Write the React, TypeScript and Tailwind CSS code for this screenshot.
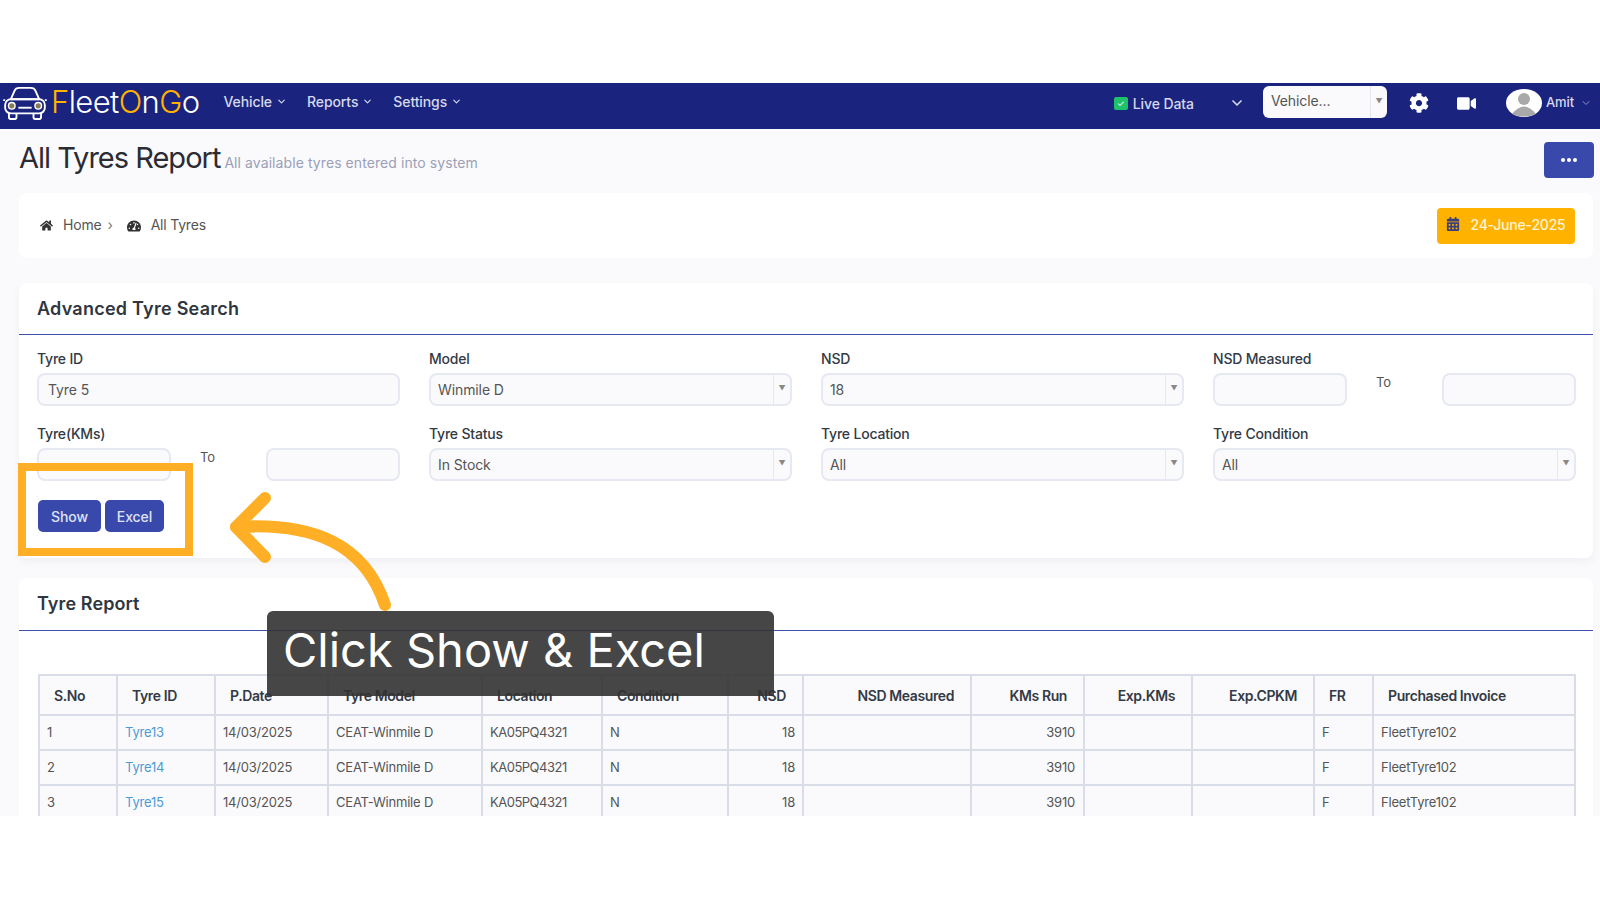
import { ChevronDown } from "lucide-react";
import { FaCalendarAlt, FaCog, FaHome, FaTachometerAlt, FaVideo } from "react-icons/fa";

const columns = [
  { label: "S.No", width: "w-[78px]" },
  { label: "Tyre ID", width: "w-[98px]" },
  { label: "P.Date", width: "w-[113px]" },
  { label: "Tyre Model", width: "w-[154px]" },
  { label: "Location", width: "w-[120px]" },
  { label: "Condition", width: "w-[126px]" },
  { label: "NSD", width: "w-[75px]", right: true },
  { label: "NSD Measured", width: "w-[168px]", right: true },
  { label: "KMs Run", width: "w-[113px]", right: true },
  { label: "Exp.KMs", width: "w-[108px]", right: true },
  { label: "Exp.CPKM", width: "w-[122px]", right: true },
  { label: "FR", width: "w-[59px]" },
  { label: "Purchased Invoice", width: "w-[202px]" },
];

const rows = ["Tyre13", "Tyre14", "Tyre15"];

function CarLogo() {
  return (
    <svg viewBox="0 0 48 36" className="h-[34px] w-[48px] shrink-0" fill="none" stroke="white" strokeWidth="2">
      <path d="M9 14 L13 5 Q14 2 18 2 H30 Q34 2 35 5 L39 14" />
      <path d="M9 14 H39" />
      <rect x="3" y="14" width="42" height="15" rx="6" />
      <path d="M3 15 H1 M45 15 H47" />
      <circle cx="10" cy="21" r="3.5" fill="#8a7a55" strokeWidth="1.5" />
      <circle cx="38" cy="21" r="3.5" fill="#8a7a55" strokeWidth="1.5" />
      <path d="M17 23 H31" />
      <path d="M7 29 V33 Q7 35 10 35 H12 Q15 35 15 33 V29 M33 29 V33 Q33 35 36 35 H38 Q41 35 41 33 V29" />
    </svg>
  );
}

function NavItem({ label }: { label: string }) {
  return (
    <div className="flex items-center gap-[4px] text-[14px] font-medium text-[#d6d9ec]">
      {label}
      <ChevronDown size={11} strokeWidth={2.5} />
    </div>
  );
}

function Field({ label, children }: { label: string; children: React.ReactNode }) {
  return (
    <div>
      <div className="mb-[6px] h-[17px] text-[14px] leading-[17px] font-medium tracking-[-0.2px] text-[#333a45]">{label}</div>
      {children}
    </div>
  );
}

function SelectBox({ value }: { value: string }) {
  return (
    <div className="flex h-[33px] items-center rounded-[8px] border-2 border-[#e6e9f1] bg-[#fafafc] text-[14px] text-[#555]">
      <span className="flex-1 pl-[7px]">{value}</span>
      <span className="flex h-full w-[17px] items-center justify-center border-l border-[#e6e9f1] text-[7px] text-[#888]">▼</span>
    </div>
  );
}

function RangeField({ label }: { label: string }) {
  return (
    <Field label={label}>
      <div className="flex items-start justify-between">
        <div className="h-[33px] w-[134px] rounded-[8px] border-2 border-[#e6e9f1] bg-[#fafafc]" />
        <span className="ml-[29px] flex-1 text-[13px] leading-[18px] text-[#555]">To</span>
        <div className="h-[33px] w-[134px] rounded-[8px] border-2 border-[#e6e9f1] bg-[#fafafc]" />
      </div>
    </Field>
  );
}

export default function App() {
  return (
    <div className="relative h-[900px] w-[1600px] overflow-hidden bg-white font-[family-name:Inter] tracking-[-0.1px]">
      <div className="mt-[83px] h-[733px] overflow-hidden bg-[#fafafc]">
        <nav className="flex h-[46px] items-center bg-[#1a237e]">
          <div className="mb-[6px] ml-[1px] flex items-center">
            <CarLogo />
            <span className="ml-[2px] pb-[3px] text-[31px] leading-none font-light tracking-[-0.6px] text-white">
              <span className="text-[#ffb300]">F</span>leet<span className="text-[#ffb300]">O</span>n<span className="text-[#ffb300]">G</span>o
            </span>
          </div>
          <div className="ml-[24px] flex gap-[20px] pb-[9px]">
            <NavItem label="Vehicle" />
            <NavItem label="Reports" />
            <NavItem label="Settings" />
          </div>
          <div className="ml-auto flex items-center pb-[6px]">
            <span className="flex h-[13px] w-[14px] items-center justify-center rounded-[2px] bg-[#1fc16b] text-[9px] leading-none text-white">✓</span>
            <span className="ml-[5px] text-[14px] font-medium text-[#d6d9ec]">Live Data</span>
            <ChevronDown size={16} strokeWidth={2.5} className="ml-[35px] text-[#d6d9ec]" />
            <div className="mb-[2px] ml-[18px] flex h-[32px] w-[124px] items-center rounded-[6px] bg-[#fafafc] text-[14px] text-[#555]">
              <span className="flex-1 pb-[3px] pl-[8px]">Vehicle...</span>
              <span className="flex h-full w-[17px] items-center justify-center border-l border-[#e6e9f1] text-[7px] text-[#888]">▼</span>
            </div>
            <FaCog size={20} className="ml-[22px] text-white" />
            <FaVideo size={19} className="ml-[28px] text-white" />
            <svg viewBox="0 0 36 28" className="ml-[30px] h-[28px] w-[36px]">
              <ellipse cx="18" cy="14" rx="18" ry="14" fill="white" />
              <circle cx="18" cy="10" r="6" fill="#a9a9a9" />
              <path d="M6 25 Q18 10 30 25 Q18 30 6 25Z" fill="#a9a9a9" />
            </svg>
            <span className="ml-[4px] text-[13px] font-medium text-[#d6d9ec]">Amit</span>
            <ChevronDown size={12} className="mr-[8px] ml-[6px] text-[#8f95c6]" />
          </div>
        </nav>

        <div className="flex items-start pt-[13px] pr-[6px] pl-[19px]">
          <h1 className="text-[29px] leading-[32px] font-normal tracking-[-1px] text-[#2b2b33]">All Tyres Report</h1>
          <span className="mt-[11px] ml-[4px] text-[14px] leading-[20px] tracking-[0.08px] text-[#9aa0b8]">All available tyres entered into system</span>
          <button className="ml-auto flex h-[36px] w-[50px] items-center justify-center gap-[2px] rounded-[4px] bg-[#3949ab]">
            <span className="h-[4px] w-[4px] rounded-full bg-white" />
            <span className="h-[4px] w-[4px] rounded-full bg-white" />
            <span className="h-[4px] w-[4px] rounded-full bg-white" />
          </button>
        </div>

        <div className="mt-[15px] mr-[7px] ml-[19px] flex h-[65px] items-center rounded-[8px] bg-white pr-[18px] pl-[21px] text-[14px] tracking-[-0.2px] text-[#555]">
          <FaHome size={13} className="text-[#333]" />
          <span className="ml-[10px] pb-[2px]">Home</span>
          <span className="ml-[6px] pb-[2px] text-[#777]">›</span>
          <FaTachometerAlt size={14} className="ml-[14px] text-[#333]" />
          <span className="ml-[10px] pb-[2px]">All Tyres</span>
          <div className="ml-auto flex h-[36px] w-[138px] items-center justify-center gap-[10px] rounded-[4px] bg-[#ffb300] pb-[3px] text-[14px] font-medium text-[#fff3d6]">
            <FaCalendarAlt size={14} className="text-[#3b3f7a]" />
            24-June-2025
          </div>
        </div>

        <section className="mt-[25px] mr-[7px] ml-[19px] h-[275px] rounded-[8px] bg-white shadow-[0_4px_8px_rgba(40,50,90,0.05)]">
          <div className="flex h-[52px] items-center border-b border-[#3f51a8] pl-[18px] text-[18px] font-semibold tracking-[0.25px] text-[#2f3640]">Advanced Tyre Search</div>
          <div className="grid grid-cols-4 gap-x-[29px] gap-y-[19px] pt-[15px] pr-[17px] pl-[18px]">
            <Field label="Tyre ID">
              <div className="flex h-[33px] items-center rounded-[8px] border-2 border-[#e6e9f1] bg-[#fafafc] pl-[9px] text-[14px] text-[#555]">Tyre 5</div>
            </Field>
            <Field label="Model"><SelectBox value="Winmile D" /></Field>
            <Field label="NSD"><SelectBox value="18" /></Field>
            <RangeField label="NSD Measured" />
            <RangeField label="Tyre(KMs)" />
            <Field label="Tyre Status"><SelectBox value="In Stock" /></Field>
            <Field label="Tyre Location"><SelectBox value="All" /></Field>
            <Field label="Tyre Condition"><SelectBox value="All" /></Field>
          </div>
          <div className="mt-[19px] flex gap-[4px] pl-[19px]">
            <button className="h-[32px] w-[63px] rounded-[5px] bg-[#3949ab] text-[14px] font-medium text-[#dfe3f5]">Show</button>
            <button className="h-[32px] w-[59px] rounded-[5px] bg-[#3949ab] text-[14px] font-medium text-[#dfe3f5]">Excel</button>
          </div>
        </section>

        <section className="mt-[20px] mr-[7px] ml-[19px] rounded-[8px] bg-white pb-[10px]">
          <div className="flex h-[53px] items-center border-b border-[#3f51a8] pb-[1px] pl-[18px] text-[18px] font-semibold tracking-[0.1px] text-[#2f3640]">Tyre Report</div>
          <div className="pt-[43px] pr-[18px] pl-[19px]">
            <table className="w-[1536px] table-fixed border-collapse bg-[#fafafc]">
              <colgroup>
                {columns.map((c) => (
                  <col key={c.label} className={c.width} />
                ))}
              </colgroup>
              <thead>
                <tr className="h-[40px]">
                  {columns.map((c) => (
                    <th key={c.label} className={`border-2 border-[#d9dde7] text-[14px] font-semibold tracking-[-0.4px] text-[#333a45] ${c.right ? "pr-[16px] text-right" : "pl-[14px] text-left"}`}>
                      {c.label}
                    </th>
                  ))}
                </tr>
              </thead>
              <tbody>
                {rows.map((tyre, i) => (
                  <tr key={tyre} className="h-[35px] text-[13px] tracking-[-0.2px] text-[#555]">
                    <td className="border-2 border-[#d9dde7] px-[7px]">{i + 1}</td>
                    <td className="border-2 border-[#d9dde7] px-[7px] text-[#4d9ad4]">{tyre}</td>
                    <td className="border-2 border-[#d9dde7] px-[7px]">14/03/2025</td>
                    <td className="border-2 border-[#d9dde7] px-[7px]">CEAT-Winmile D</td>
                    <td className="border-2 border-[#d9dde7] px-[7px] tracking-[-0.5px]">KA05PQ4321</td>
                    <td className="border-2 border-[#d9dde7] px-[7px]">N</td>
                    <td className="border-2 border-[#d9dde7] px-[7px] text-right">18</td>
                    <td className="border-2 border-[#d9dde7]" />
                    <td className="border-2 border-[#d9dde7] px-[8px] text-right">3910</td>
                    <td className="border-2 border-[#d9dde7]" />
                    <td className="border-2 border-[#d9dde7]" />
                    <td className="border-2 border-[#d9dde7] px-[7px]">F</td>
                    <td className="border-2 border-[#d9dde7] px-[7px]">FleetTyre102</td>
                  </tr>
                ))}
              </tbody>
            </table>
          </div>
        </section>
      </div>

      {/* tutorial callout on top of the page */}
      <div className="absolute top-[463px] left-[18px] h-[93px] w-[175px] border-[8px] border-[#ffaf26]" />
      <svg className="absolute top-[480px] left-[220px]" width="180" height="135" viewBox="220 480 180 135" fill="none" stroke="#ffaf26" strokeWidth="12" strokeLinecap="round" strokeLinejoin="round">
        <path d="M385 605 C365 545 315 522 236 527" />
        <path d="M265 498 L236 527 L265 557" />
      </svg>
      <div className="absolute top-[611px] left-[267px] flex h-[85px] w-[507px] items-center rounded-t-[6px] bg-[#323232]/90 pb-[6px] pl-[16px] text-[47px] tracking-[0px] text-white">
        Click Show &amp; Excel
      </div>
    </div>
  );
}
